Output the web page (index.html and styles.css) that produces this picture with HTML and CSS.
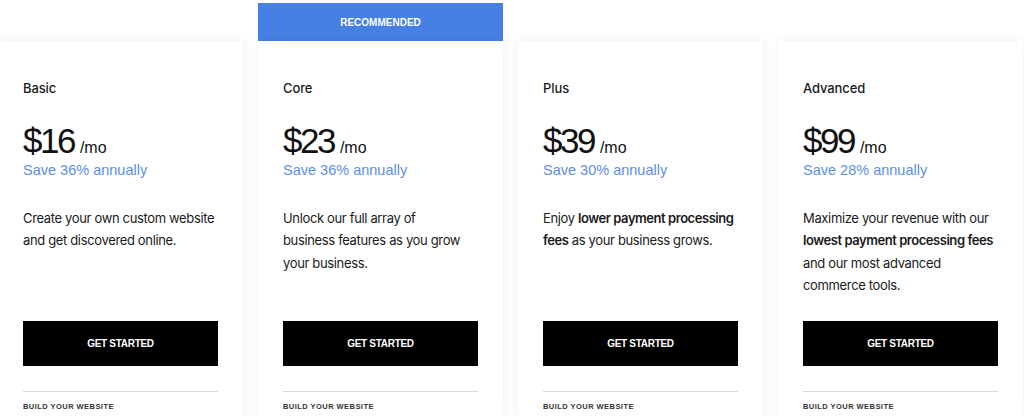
FILE: index.html
```html
<!DOCTYPE html>
<html>
<head>
<meta charset="utf-8">
<link rel="stylesheet" href="styles.css">
</head>
<body>
<div class="plans">
  <div class="plan">
    <div class="card">
      <h3 class="name">Basic</h3>
      <div class="price"><span class="amount">$16</span> <span class="per">/mo</span></div>
      <div class="save">Save 36% annually</div>
      <p class="desc">Create your own custom website and get discovered online.</p>
      <a class="btn">GET STARTED</a>
      <div class="section">BUILD YOUR WEBSITE</div>
    </div>
  </div>
  <div class="plan recommended">
    <div class="badge">RECOMMENDED</div>
    <div class="card">
      <h3 class="name">Core</h3>
      <div class="price"><span class="amount">$23</span> <span class="per">/mo</span></div>
      <div class="save">Save 36% annually</div>
      <p class="desc">Unlock our full array of<br>business features as you grow your business.</p>
      <a class="btn">GET STARTED</a>
      <div class="section">BUILD YOUR WEBSITE</div>
    </div>
  </div>
  <div class="plan">
    <div class="card">
      <h3 class="name">Plus</h3>
      <div class="price"><span class="amount">$39</span> <span class="per">/mo</span></div>
      <div class="save">Save 30% annually</div>
      <p class="desc">Enjoy <b>lower payment processing fees</b> as your business grows.</p>
      <a class="btn">GET STARTED</a>
      <div class="section">BUILD YOUR WEBSITE</div>
    </div>
  </div>
  <div class="plan">
    <div class="card">
      <h3 class="name">Advanced</h3>
      <div class="price"><span class="amount">$99</span> <span class="per">/mo</span></div>
      <div class="save">Save 28% annually</div>
      <p class="desc">Maximize your revenue with our <b>lowest payment processing fees</b> and our most advanced commerce tools.</p>
      <a class="btn">GET STARTED</a>
      <div class="section">BUILD YOUR WEBSITE</div>
    </div>
  </div>
</div>
</body>
</html>
```

FILE: styles.css
```css
html, body {
  margin: 0;
  padding: 0;
  background: #ffffff;
  overflow: hidden;
}
body {
  font-family: "Liberation Sans", Arial, sans-serif;
  color: #111;
  width: 1024px;
  height: 416px;
}
.plans {
  display: flex;
  gap: 15px;
  margin-left: -2px;
  padding-top: 3px;
}
.plan {
  width: 245px;
  flex: none;
  display: flex;
  flex-direction: column;
  padding-top: 38px;
}
.plan.recommended {
  padding-top: 0;
}
.badge {
  height: 38px;
  background: #4680e3;
  color: #fff;
  font-size: 10px;
  font-weight: 700;
  display: flex;
  align-items: center;
  justify-content: center;
}
.card {
  box-sizing: border-box;
  background: #fff;
  box-shadow: 0 0 12px rgba(0, 0, 0, 0.07);
  padding: 38px 25px 0 25px;
  height: 375px;
}
.name {
  margin: 0;
  font-family: Inter, "Liberation Sans", sans-serif;
  font-size: 13px;
  font-weight: 500;
  line-height: 18px;
  color: #1a1a1a;
  letter-spacing: -0.1px;
}
.price {
  margin-top: 24px;
  display: flex;
  align-items: baseline;
  gap: 6px;
  line-height: 40px;
}
.amount {
  font-size: 35px;
  letter-spacing: -2.5px;
}
.per {
  font-size: 16px;
}
.save {
  color: #5d8ee8;
  font-size: 14.5px;
  line-height: 20px;
  margin-top: -8px;
}
.desc {
  margin: 27px 0 0 0;
  font-family: Inter, "Liberation Sans", sans-serif;
  font-size: 13px;
  letter-spacing: -0.35px;
  line-height: 22.4px;
  color: #1a1a1a;
  height: 90px;
}
.desc b {
  font-weight: 600;
  letter-spacing: -0.45px;
}
.btn {
  display: flex;
  align-items: center;
  justify-content: center;
  height: 45px;
  margin-top: 24px;
  background: #000;
  color: #fff;
  font-size: 10px;
  font-weight: 700;
  letter-spacing: -0.3px;
}
.section {
  margin-top: 25px;
  border-top: 1px solid #d8d8d8;
  padding-top: 10px;
  font-size: 7.5px;
  line-height: 10px;
  font-weight: 700;
  letter-spacing: 0.45px;
  color: #333;
}
```
